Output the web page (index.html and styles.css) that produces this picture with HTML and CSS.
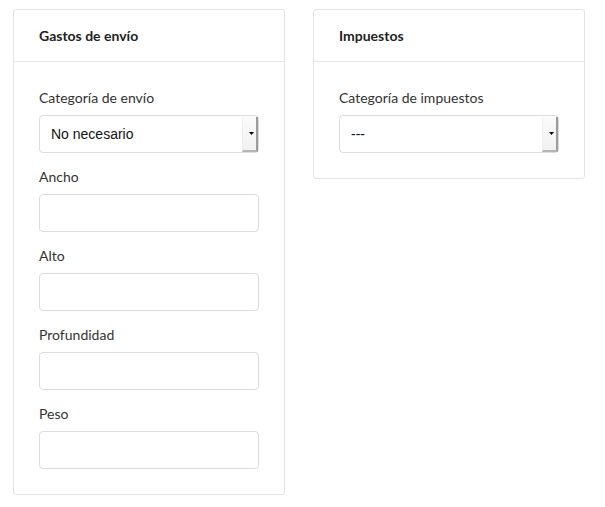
FILE: index.html
```html
<!DOCTYPE html>
<html lang="es">
<head>
<meta charset="utf-8">
<title>Producto</title>
<link rel="stylesheet" href="styles.css">
</head>
<body>
<div class="layout">
  <section class="card">
    <header class="card-header">Gastos de envío</header>
    <div class="card-body">
      <div class="field">
        <label class="label">Categoría de envío</label>
        <div class="select-wrap">
          <select class="select"><option>No necesario</option></select>
        </div>
      </div>
      <div class="field">
        <label class="label">Ancho</label>
        <input class="input" type="text">
      </div>
      <div class="field">
        <label class="label">Alto</label>
        <input class="input" type="text">
      </div>
      <div class="field">
        <label class="label">Profundidad</label>
        <input class="input" type="text">
      </div>
      <div class="field">
        <label class="label">Peso</label>
        <input class="input" type="text">
      </div>
    </div>
  </section>
  <section class="card">
    <header class="card-header">Impuestos</header>
    <div class="card-body">
      <div class="field">
        <label class="label">Categoría de impuestos</label>
        <div class="select-wrap">
          <select class="select"><option>---</option></select>
        </div>
      </div>
    </div>
  </section>
</div>
</body>
</html>
```

FILE: styles.css
```css
* { box-sizing: border-box; }
body {
  margin: 0;
  background: #fff;
  font-family: Lato, "Open Sans", sans-serif;
  font-size: 14px;
  color: #333;
}
.layout {
  display: flex;
  align-items: flex-start;
  gap: 28px;
  padding: 9px 13px;
}
.card {
  width: 272px;
  border: 1px solid #e4e4e4;
  border-radius: 3px;
  background: #fff;
}
.card-header {
  height: 52px;
  padding: 0 25px;
  display: flex;
  align-items: center;
  font-weight: 700;
  color: #222;
  border-bottom: 1px solid #e6e6e6;
}
.card-body {
  padding: 26px 25px 25px;
  display: flex;
  flex-direction: column;
  gap: 14px;
}
.field {
  display: flex;
  flex-direction: column;
  gap: 7px;
}
.label {
  line-height: 20px;
  color: #333;
}
.input, .select {
  width: 220px;
  height: 38px;
  border: 1px solid #dcdcdc;
  border-radius: 4px;
  background: #fff;
  margin: 0;
}
.select-wrap {
  position: relative;
  width: 220px;
}
.select {
  appearance: none;
  -webkit-appearance: none;
  padding: 0 20px 0 11px;
  font-family: "Liberation Sans", Arial, sans-serif;
  font-size: 14px;
  color: #111;
}
.select-wrap::after {
  content: "";
  position: absolute;
  top: 2px;
  right: 1px;
  bottom: 1px;
  width: 13px;
  background: linear-gradient(#fbfbfb, #f1f1f1);
  border-left: 1px solid #f0f0f0;
  border-right: 2px solid #9c9c9c;
  border-bottom: 2px solid #b5b5b5;
  pointer-events: none;
}
.select-wrap::before {
  content: "";
  position: absolute;
  top: 17px;
  right: 5px;
  width: 5px;
  height: 3px;
  background: #000;
  clip-path: polygon(0 0, 100% 0, 50% 100%);
  z-index: 1;
  pointer-events: none;
}
```
